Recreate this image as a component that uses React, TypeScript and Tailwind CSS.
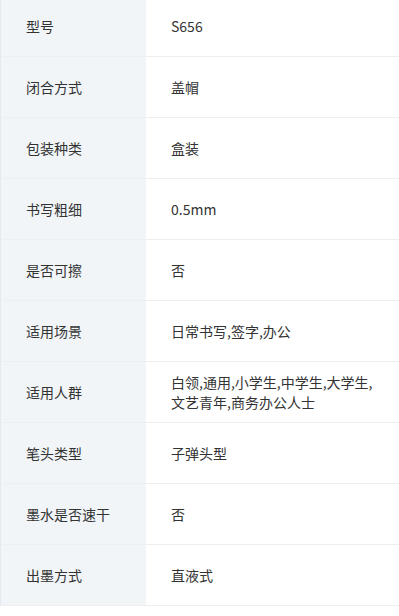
const rows: [string, string][] = [
  ["型号", "S656"],
  ["闭合方式", "盖帽"],
  ["包装种类", "盒装"],
  ["书写粗细", "0.5mm"],
  ["是否可擦", "否"],
  ["适用场景", "日常书写,签字,办公"],
  ["适用人群", "白领,通用,小学生,中学生,大学生,文艺青年,商务办公人士"],
  ["笔头类型", "子弹头型"],
  ["墨水是否速干", "否"],
  ["出墨方式", "直液式"],
];

export default function App() {
  return (
    <div
      className="min-h-screen bg-white text-[#333] text-[14px]"
      style={{ fontFamily: '"Segoe UI", "Noto Sans CJK SC", "Noto Sans", sans-serif' }}
    >
      <div className="-mt-1 border-l border-[#e6e9ed]">
        {rows.map(([label, value]) => (
          <div key={label} className="flex">
            <div className="w-[145px] shrink-0 h-[61px] flex items-center pl-[25px] bg-[#f2f5f8] border-b border-[#ecf0f4]">
              {label}
            </div>
            <div className="flex-1 h-[61px] flex items-center pl-[25px] pr-4 leading-[20px] border-b border-[#eeeeee]">
              {value}
            </div>
          </div>
        ))}
      </div>
    </div>
  );
}
